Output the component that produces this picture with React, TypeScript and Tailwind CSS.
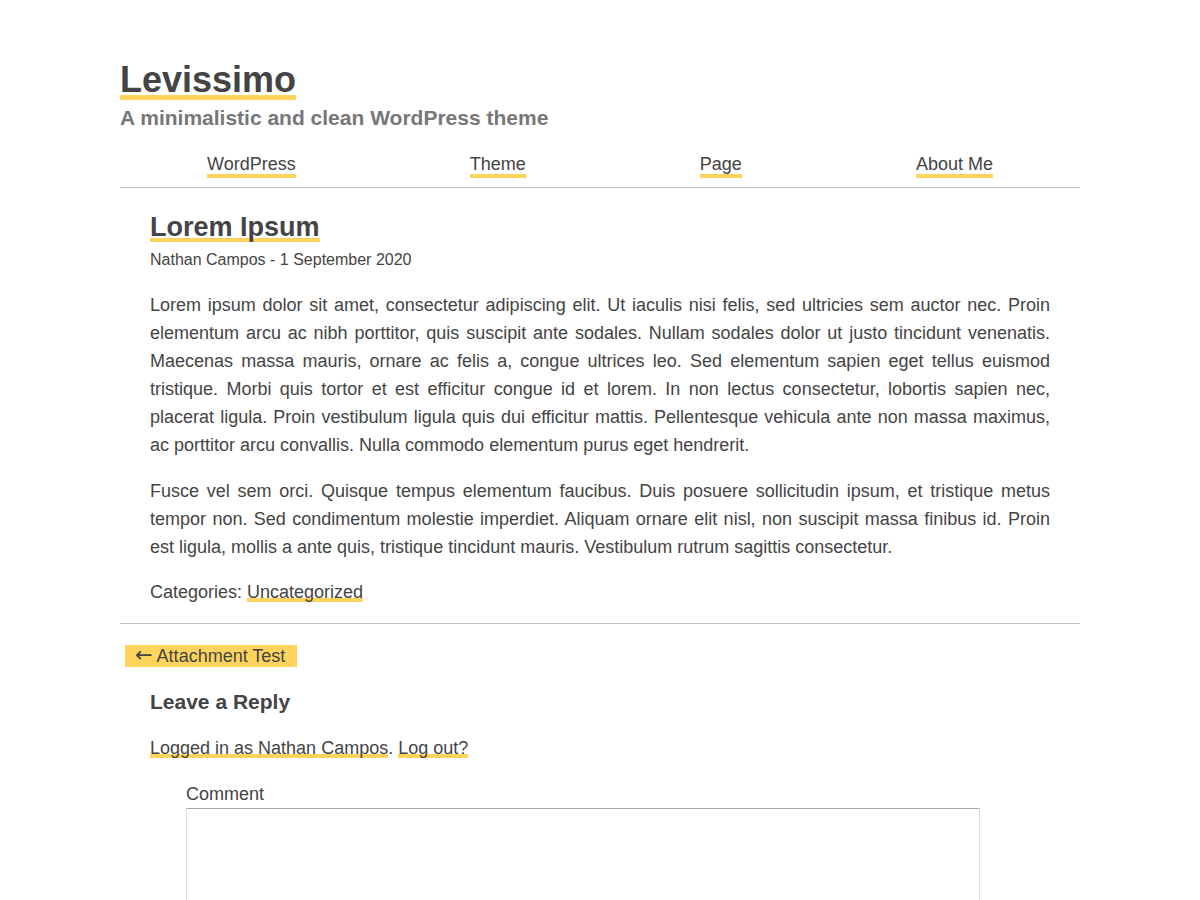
import React from "react";

const U = "shadow-[inset_0_-4px_0_#ffd45c]";

export default function App() {
  return (
    <div className="min-h-[900px] bg-white text-[#444] font-['Liberation_Sans',Arial,sans-serif]">
      <div className="mx-auto w-[960px] pt-[60px]">
        <header>
          <h1 className="text-[36px] leading-[40px] font-bold">
            <a className="shadow-[inset_0_-5px_0_#ffd45c] text-[#444]">Levissimo</a>
          </h1>
          <p className="mt-[6px] text-[21px] leading-[24px] font-bold text-[#777]">
            A minimalistic and clean WordPress theme
          </p>
          <nav className="mt-[20px] pb-[9px] border-b border-[#c4c4c4] flex justify-around text-[18px] leading-[28px]">
            <a className={U}>WordPress</a>
            <a className={U}>Theme</a>
            <a className={U}>Page</a>
            <a className={U}>About Me</a>
          </nav>
        </header>

        <article className="px-[30px] pt-[23px] pb-[17px] border-b border-[#c4c4c4]">
          <h2 className="text-[27px] leading-[32px] font-bold">
            <a className={U}>Lorem Ipsum</a>
          </h2>
          <p className="mt-[5px] text-[16px] leading-[24px]">Nathan Campos - 1 September 2020</p>
          <div className="mt-[19px] text-[18px] leading-[28px] text-justify">
            <p>
              Lorem ipsum dolor sit amet, consectetur adipiscing elit. Ut iaculis nisi felis, sed ultricies sem auctor nec. Proin elementum arcu ac nibh porttitor, quis suscipit ante sodales. Nullam sodales dolor ut justo tincidunt venenatis. Maecenas massa mauris, ornare ac felis a, congue ultrices leo. Sed elementum sapien eget tellus euismod tristique. Morbi quis tortor et est efficitur congue id et lorem. In non lectus consectetur, lobortis sapien nec, placerat ligula. Proin vestibulum ligula quis dui efficitur mattis. Pellentesque vehicula ante non massa maximus, ac porttitor arcu convallis. Nulla commodo elementum purus eget hendrerit.
            </p>
            <p className="mt-[18px]">
              Fusce vel sem orci. Quisque tempus elementum faucibus. Duis posuere sollicitudin ipsum, et tristique metus tempor non. Sed condimentum molestie imperdiet. Aliquam ornare elit nisl, non suscipit massa finibus id. Proin est ligula, mollis a ante quis, tristique tincidunt mauris. Vestibulum rutrum sagittis consectetur.
            </p>
            <p className="mt-[17px]">
              Categories: <a className={U}>Uncategorized</a>
            </p>
          </div>
        </article>

        <div className="mt-[18px] text-[18px] leading-[28px]">
          <a className="ml-[5px] bg-[#ffd45c] pl-[10px] pr-[12px] py-[1px]">
            <span className="font-['DejaVu_Sans',sans-serif] text-[21px] leading-none">←</span> Attachment Test
          </a>
        </div>

        <section className="px-[30px] mt-[18px]">
          <h3 className="text-[21px] leading-[28px] font-bold">Leave a Reply</h3>
          <p className="mt-[18px] text-[18px] leading-[28px]">
            <a className={U}>Logged in as Nathan Campos</a>. <a className={U}>Log out?</a>
          </p>
          <div className="mt-[18px] ml-[36px] text-[18px] leading-[28px]">
            <label className="block">Comment</label>
            <textarea className="block w-[794px] h-[200px] border border-[#ddd] border-t-[#aaa] resize-none outline-none" />
          </div>
        </section>
      </div>
    </div>
  );
}
